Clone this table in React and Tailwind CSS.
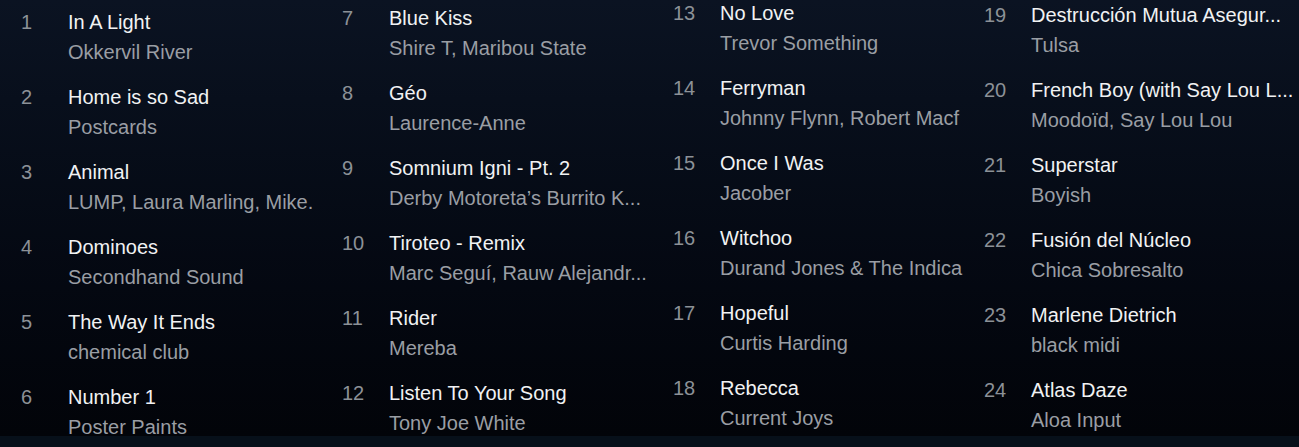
import React from 'react'

const columns = [
  {
    offset: 'pt-[7px]',
    width: 'w-[321px]',
    tracks: [
      [1, 'In A Light', 'Okkervil River'],
      [2, 'Home is so Sad', 'Postcards'],
      [3, 'Animal', 'LUMP, Laura Marling, Mike.'],
      [4, 'Dominoes', 'Secondhand Sound'],
      [5, 'The Way It Ends', 'chemical club'],
      [6, 'Number 1', 'Poster Paints'],
    ],
  },
  {
    offset: 'pt-[3px]',
    width: 'w-[331px]',
    tracks: [
      [7, 'Blue Kiss', 'Shire T, Maribou State'],
      [8, 'Géo', 'Laurence-Anne'],
      [9, 'Somnium Igni - Pt. 2', 'Derby Motoreta’s Burrito K...'],
      [10, 'Tiroteo - Remix', 'Marc Seguí, Rauw Alejandr...'],
      [11, 'Rider', 'Mereba'],
      [12, 'Listen To Your Song', 'Tony Joe White'],
    ],
  },
  {
    offset: '-mt-[2px]',
    width: 'w-[311px]',
    tracks: [
      [13, 'No Love', 'Trevor Something'],
      [14, 'Ferryman', 'Johnny Flynn, Robert Macf'],
      [15, 'Once I Was', 'Jacober'],
      [16, 'Witchoo', 'Durand Jones & The Indica'],
      [17, 'Hopeful', 'Curtis Harding'],
      [18, 'Rebecca', 'Current Joys'],
    ],
  },
  {
    offset: 'pt-0',
    width: 'w-[336px]',
    tracks: [
      [19, 'Destrucción Mutua Asegur...', 'Tulsa'],
      [20, 'French Boy (with Say Lou L...', 'Moodoïd, Say Lou Lou'],
      [21, 'Superstar', 'Boyish'],
      [22, 'Fusión del Núcleo', 'Chica Sobresalto'],
      [23, 'Marlene Dietrich', 'black midi'],
      [24, 'Atlas Daze', 'Aloa Input'],
    ],
  },
]

const Track = ({ n, title, artist }) => (
  <div className='flex h-[60px]'>
    <div className='w-[47px] shrink-0 text-[#8c9197] leading-[30px]'>{n}</div>
    <div className='min-w-0 flex-1 whitespace-nowrap'>
      <div className='text-[#f1f2f3] leading-[30px]'>{title}</div>
      <div className='text-[#9a9ea4] leading-[30px]'>{artist}</div>
    </div>
  </div>
)

export default function App() {
  return (
    <div className='w-[1299px] h-[447px] bg-[#07101a] overflow-hidden' style={{ fontFamily: '"Liberation Sans", Arial, sans-serif' }}>
      <div className='h-[436px] flex bg-gradient-to-b from-[#0b1322] to-[#020409] text-[20px] overflow-hidden'>
        {columns.map((col, i) => (
          <div key={i} className={`${col.width} ${col.offset} shrink-0 pl-[21px] flex flex-col gap-[15px]`}>
            {col.tracks.map(([n, t, a]) => (
              <Track key={n} n={n} title={t} artist={a} />
            ))}
          </div>
        ))}
      </div>
    </div>
  )
}
